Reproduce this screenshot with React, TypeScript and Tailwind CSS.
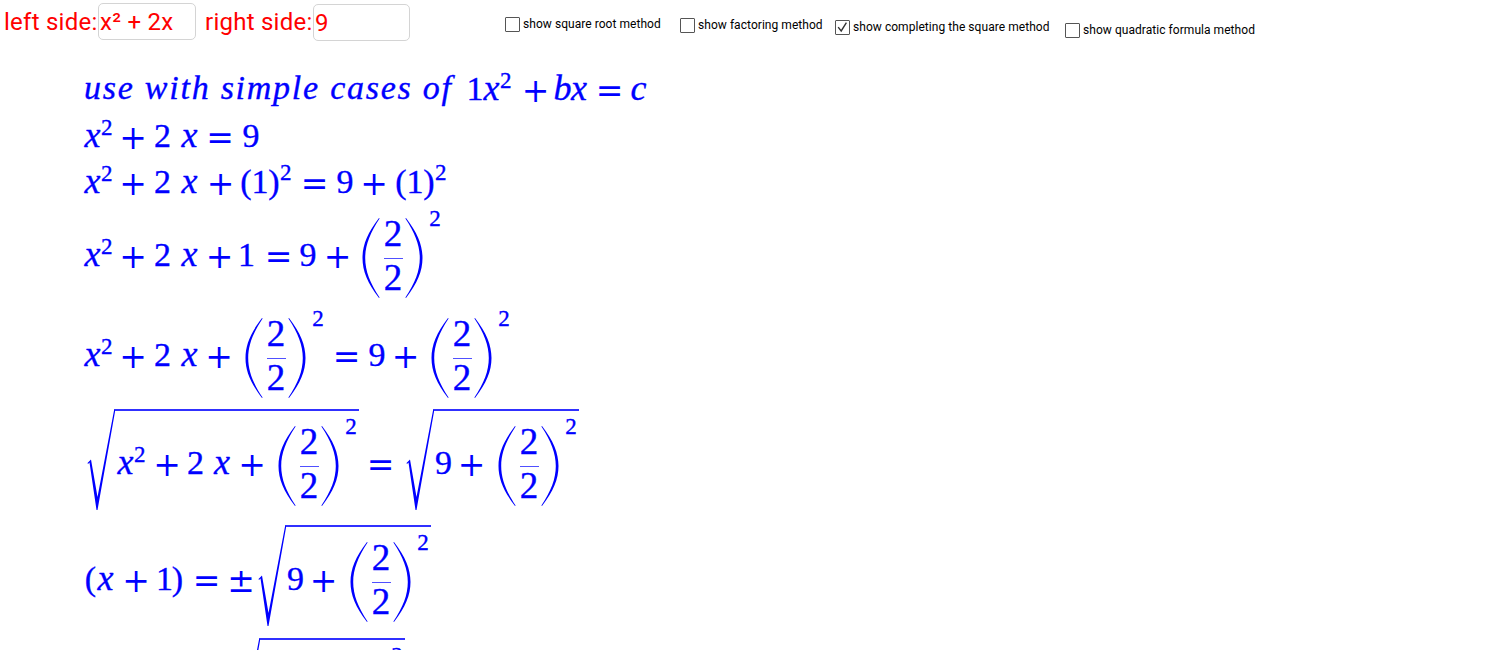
import React from "react";

const stroke = "[-webkit-text-stroke:0.35px_#0000ff]";
const num = `font-['Liberation_Serif',serif] text-[34px] leading-none text-center flex justify-center shrink-0 mb-[7px] ${stroke}`;
const ital = `font-['Liberation_Serif',serif] italic text-[36px] leading-none text-center flex justify-center shrink-0 mb-[8px] ${stroke}`;
const op = "font-['DejaVu_Serif',serif] text-[33px] leading-none text-center flex justify-center shrink-0 mb-[3px]";

function Sup() {
  return <span className={`block font-['Liberation_Serif',serif] text-[23px] leading-none ${stroke}`}>2</span>;
}

function XSq({ className }: { className: string }) {
  return (
    <span className={`flex shrink-0 items-center ${className}`}>
      <span className={`${ital} w-[17px]`}>x</span>
      <span className="mb-[23px] w-[12px] shrink-0"><Sup /></span>
    </span>
  );
}

function Paren({ flip }: { flip?: boolean }) {
  return (
    <svg viewBox="0 0 18 80" className={`block h-[80px] w-[18px] shrink-0 ${flip ? "-scale-x-100" : ""}`} fill="#0000ff">
      <path d="M17 0C5.5 15 0.5 27 0.5 40C0.5 53 5.5 65 17 80L17.6 79.6C8 65 3.2 53 3.2 40C3.2 27 8 15 17.6 0.4Z" />
    </svg>
  );
}

function BigFrac({ className }: { className: string }) {
  return (
    <span className={`flex shrink-0 items-center ${className}`}>
      <Paren />
      <span className="ml-[3px] flex w-[20px] shrink-0 flex-col items-center">
        <span className={`mb-[4px] -translate-y-[4px] font-['Liberation_Serif',serif] text-[37px] leading-[32px] ${stroke}`}>2</span>
        <span className="h-px w-[19px] bg-[#5050ff]" />
        <span className={`mt-[4px] -translate-y-[1px] font-['Liberation_Serif',serif] text-[37px] leading-[32px] ${stroke}`}>2</span>
      </span>
      <span className="ml-[2px]"><Paren flip /></span>
      <span className="mb-[80px] ml-[6px] w-[12px] shrink-0 text-center"><Sup /></span>
    </span>
  );
}

function ParenOne({ className }: { className: string }) {
  return (
    <span className={`flex shrink-0 items-center ${className}`}>
      <span className={`${num} w-[12px]`}>(</span>
      <span className={`${num} w-[16px]`}>1</span>
      <span className={`${num} w-[12px]`}>)</span>
      <span className="mb-[26px] w-[13px] shrink-0"><Sup /></span>
    </span>
  );
}

function Lead() {
  return (
    <>
      <XSq className="w-[37px]" />
      <span className={`${op} w-[24px]`}>+</span>
      <span className={`${num} ml-[10px] w-[15px]`}>2</span>
      <span className={`${ital} ml-[11px] w-[17px]`}>x</span>
    </>
  );
}

function Radical({ className, children }: { className: string; children: React.ReactNode }) {
  return (
    <span className={`mb-[13px] flex shrink-0 items-stretch ${className}`}>
      <svg viewBox="0 0 28 101" className="block h-[101px] w-[28px] shrink-0" fill="#0000ff">
        <path d="M0.5 54L4 50.5L10.5 88L27.3 0H28.5L10.5 101H9.5L2.5 53.5L1 55Z" />
      </svg>
      <span className="flex h-[101px] items-center border-t-2 border-[#3030ff] pt-[11px] pr-[2px]">{children}</span>
    </span>
  );
}

function NineRoot() {
  return (
    <>
      <span className={`${num} ml-[2px] w-[15px]`}>9</span>
      <span className={`${op} ml-[9px] w-[23px]`}>+</span>
      <BigFrac className="ml-[15px]" />
    </>
  );
}

function Box({ checked, className, label }: { checked?: boolean; className: string; label: string }) {
  return (
    <div className={`flex shrink-0 items-center ${className}`}>
      <span className="flex h-[15px] w-[15px] items-center justify-center rounded-[1px] border border-[#555555] bg-white">
        {checked && (
          <svg viewBox="0 0 15 15" className="h-[13px] w-[13px]" fill="none" stroke="#333333" strokeWidth="1.6">
            <path d="M2.5 7L6 11.5L12 2" />
          </svg>
        )}
      </span>
      <span className="ml-[3px] whitespace-nowrap text-[12px] leading-[15px] tracking-[0.05px] text-black">{label}</span>
    </div>
  );
}

export default function App() {
  return (
    <div className="h-[650px] w-[1500px] overflow-hidden bg-white font-['Roboto',sans-serif]">
      <div className="flex h-[70px] items-start pl-[4px] text-[24px] tracking-[0.25px] text-[#ff0000]">
        <span className="mt-[5px] w-[94px] shrink-0 whitespace-nowrap leading-[34px]">left side:</span>
        <input
          readOnly
          value="x² + 2x"
          className="mt-[3px] h-[37px] w-[98px] shrink-0 rounded-[5px] border border-[#d4d4d4] pl-[1px] text-[24px] text-[#ff0000] outline-none"
        />
        <span className="mt-[5px] ml-[9px] w-[108px] shrink-0 whitespace-nowrap leading-[34px]">right side:</span>
        <input
          readOnly
          value="9"
          className="mt-[4px] h-[37px] w-[97px] shrink-0 rounded-[5px] border border-[#d4d4d4] pl-[1px] text-[24px] text-[#ff0000] outline-none"
        />
        <Box className="mt-[17px] ml-[95px] w-[175px]" label="show square root method" />
        <Box className="mt-[18px] w-[155px]" label="show factoring method" />
        <Box checked className="mt-[20px] w-[230px]" label="show completing the square method" />
        <Box className="mt-[23px]" label="show quadratic formula method" />
      </div>

      <div className="pl-[84px] text-[#0000ff]">
        <div className="flex h-[44px] items-center">
          <span className={`mb-[9px] w-[383px] shrink-0 whitespace-nowrap font-['Liberation_Serif',serif] text-[34px] leading-none tracking-[1.75px] italic ${stroke}`}>
            use with simple cases of
          </span>
          <span className={`${num} w-[16px]`}>1</span>
          <XSq className="w-[33px]" />
          <span className={`${op} ml-[7px] w-[25px]`}>+</span>
          <span className={`${ital} ml-[7px] w-[15px]`}>b</span>
          <span className={`${ital} w-[18px]`}>x</span>
          <span className={`${op} ml-[9px] w-[25px]`}>=</span>
          <span className={`${ital} ml-[9px] w-[15px]`}>c</span>
        </div>

        <div className="flex h-[50px] items-center">
          <Lead />
          <span className={`${op} ml-[10px] w-[24px]`}>=</span>
          <span className={`${num} ml-[11px] w-[16px]`}>9</span>
        </div>

        <div className="flex h-[42px] items-center">
          <Lead />
          <span className={`${op} ml-[11px] w-[23px]`}>+</span>
          <ParenOne className="ml-[8px]" />
          <span className={`${op} ml-[9px] w-[25px]`}>=</span>
          <span className={`${num} ml-[10px] w-[16px]`}>9</span>
          <span className={`${op} ml-[9px] w-[24px]`}>+</span>
          <ParenOne className="ml-[9px]" />
        </div>

        <div className="flex h-[104px] items-center">
          <Lead />
          <span className={`${op} ml-[9px] w-[25px]`}>+</span>
          <span className={`${num} ml-[8px] w-[13px]`}>1</span>
          <span className={`${op} ml-[14px] w-[23px]`}>=</span>
          <span className={`${num} ml-[10px] w-[16px]`}>9</span>
          <span className={`${op} ml-[10px] w-[23px]`}>+</span>
          <BigFrac className="ml-[13px]" />
        </div>

        <div className="flex h-[96px] items-center">
          <Lead />
          <span className={`${op} ml-[9px] w-[24px]`}>+</span>
          <BigFrac className="ml-[14px]" />
          <span className={`${op} ml-[11px] w-[23px]`}>=</span>
          <span className={`${num} ml-[11px] w-[16px]`}>9</span>
          <span className={`${op} ml-[9px] w-[23px]`}>+</span>
          <BigFrac className="ml-[14px]" />
        </div>

        <div className="flex h-[120px] items-center">
          <Radical className="ml-[3px]">
            <XSq className="ml-[2px] w-[35px]" />
            <span className={`${op} ml-[4px] w-[22px]`}>+</span>
            <span className={`${num} ml-[10px] w-[15px]`}>2</span>
            <span className={`${ital} ml-[11px] w-[16px]`}>x</span>
            <span className={`${op} ml-[11px] w-[22px]`}>+</span>
            <BigFrac className="ml-[15px]" />
          </Radical>
          <span className={`${op} ml-[10px] w-[23px]`}>=</span>
          <Radical className="ml-[14px]">
            <NineRoot />
          </Radical>
        </div>

        <div className="flex h-[112px] items-center">
          <span className={`${num} ml-[1px] w-[11px]`}>(</span>
          <span className={`${ital} ml-[1px] w-[17px]`}>x</span>
          <span className={`${op} ml-[11px] w-[22px]`}>+</span>
          <span className={`${num} ml-[11px] w-[13px]`}>1</span>
          <span className={`${num} ml-[1px] w-[11px]`}>)</span>
          <span className={`${op} ml-[12px] w-[23px]`}>=</span>
          <span className={`${op} ml-[12px] w-[22px]`}>±</span>
          <Radical className="ml-[6px]">
            <NineRoot />
          </Radical>
        </div>

        <div className="flex h-[116px] items-start">
          <Radical className="ml-[148px]">
            <span className="h-[8px] w-[131px] shrink-0" />
            <span className="mb-[80px] w-[12px] shrink-0 text-center"><Sup /></span>
          </Radical>
        </div>
      </div>
    </div>
  );
}
